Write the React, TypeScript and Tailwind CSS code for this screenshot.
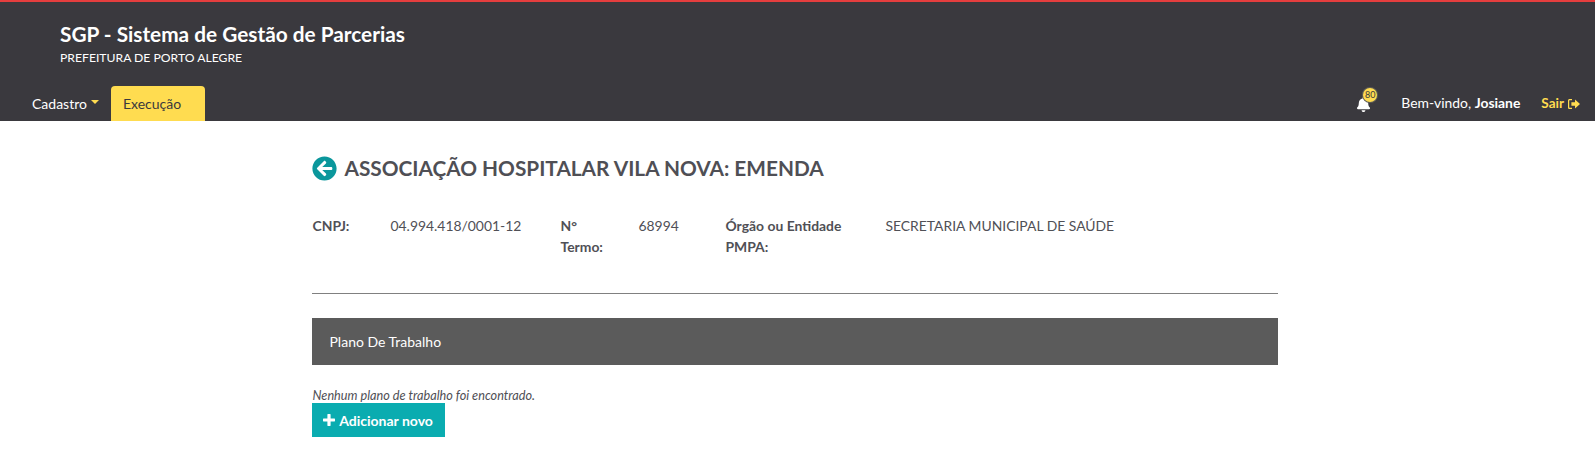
import { FaArrowCircleLeft, FaBell } from 'react-icons/fa'

function SignOutIcon() {
  return (
    <svg viewBox="0 0 12 10" className="ml-[4px] h-[10px] w-[12px]" fill="currentColor">
      <path d="M0 1.6C0 .7.7 0 1.6 0H4v1.2H1.7c-.3 0-.5.2-.5.5v6.6c0 .3.2.5.5.5H4V10H1.6C.7 10 0 9.3 0 8.4z" />
      <path d="M3.4 3.2h3.6V.6L12 5 7 9.4V6.8H3.4z" />
    </svg>
  )
}

function PlusIcon() {
  return (
    <svg viewBox="0 0 12 12" className="h-[12px] w-[12px]" fill="currentColor">
      <path d="M4.4.5c0-.3.2-.5.5-.5h2.2c.3 0 .5.2.5.5v3.9h3.9c.3 0 .5.2.5.5v2.2c0 .3-.2.5-.5.5H7.6v3.9c0 .3-.2.5-.5.5H4.9c-.3 0-.5-.2-.5-.5V7.6H.5c-.3 0-.5-.2-.5-.5V4.9c0-.3.2-.5.5-.5h3.9z" />
    </svg>
  )
}

export default function App() {
  return (
    <div className="min-h-[453px] bg-white font-['Lato','Liberation_Sans',sans-serif] text-[14px] text-[#505056]">
      <header className="h-[121px] border-t-2 border-[#e53e3e] bg-[#3a393e] text-white">
        <div className="h-[84px] pl-[60px] pt-[19px]">
          <h1 className="text-[20.8px] leading-[26px] font-bold">SGP - Sistema de Gestão de Parcerias</h1>
          <p className="mt-[4px] text-[12.2px] leading-[14px]">PREFEITURA DE PORTO ALEGRE</p>
        </div>
        <nav className="flex h-[35px] items-stretch pr-[15px] pl-[32px]">
          <button type="button" className="flex items-center">
            Cadastro
            <span className="mb-[3px] ml-[4px] border-x-[4px] border-t-[4px] border-x-transparent border-t-[#ffdc50]" />
          </button>
          <button
            type="button"
            className="ml-[12px] w-[94px] rounded-t-[4px] bg-[#ffdc50] pl-[12px] text-left text-[#3a393e]"
          >
            Execução
          </button>
          <div className="ml-auto flex items-center">
            <span className="relative mt-[2px] mr-[30px]">
              <FaBell className="h-[15px] w-[15px]" />
              <span className="absolute -top-[9px] left-[7px] flex h-[14px] w-[14px] items-center justify-center rounded-full bg-[#ffdc50] text-[9px] text-[#3a393e] shadow-[0_0_0_1px_#5f5e56]">
                80
              </span>
            </span>
            <span className="text-[13.9px]">
              Bem-vindo, <strong className="font-bold">Josiane</strong>
            </span>
            <a className="ml-[21px] flex items-center text-[13.5px] font-bold text-[#ffdc50]">
              Sair
              <SignOutIcon />
            </a>
          </div>
        </nav>
      </header>

      <main className="mx-auto w-[966px] -translate-x-[3px]">
        <div className="flex items-center pt-[34px]">
          <FaArrowCircleLeft className="h-[25px] w-[25px] text-[#0b979c]" />
          <h2 className="ml-[8px] text-[20.8px] leading-[26px] font-bold text-[#4f4f55]">
            ASSOCIAÇÃO HOSPITALAR VILA NOVA: EMENDA
          </h2>
        </div>

        <dl className="mt-[34px] flex pl-[1px] text-[13.9px] leading-[21px]">
          <dt className="w-[78px] font-bold">CNPJ:</dt>
          <dd className="w-[170px]">04.994.418/0001-12</dd>
          <dt className="w-[78px] font-bold">
            N°
            <br />
            Termo:
          </dt>
          <dd className="w-[87px]">68994</dd>
          <dt className="w-[160px] font-bold">
            Órgão ou Entidade
            <br />
            PMPA:
          </dt>
          <dd>SECRETARIA MUNICIPAL DE SAÚDE</dd>
        </dl>

        <hr className="mt-[36px] border-t border-[#808080]" />

        <div className="mt-[24px] flex h-[47px] items-center bg-[#5b5b5b] pl-[18px] text-white">Plano De Trabalho</div>

        <p className="mt-[22px] pl-[1px] text-[12.7px] leading-[16px] italic">Nenhum plano de trabalho foi encontrado.</p>

        <button
          type="button"
          className="flex h-[34px] w-[133px] items-center justify-center gap-[4px] bg-[#0aacb0] font-bold text-white"
        >
          <PlusIcon />
          Adicionar novo
        </button>
      </main>
    </div>
  )
}
